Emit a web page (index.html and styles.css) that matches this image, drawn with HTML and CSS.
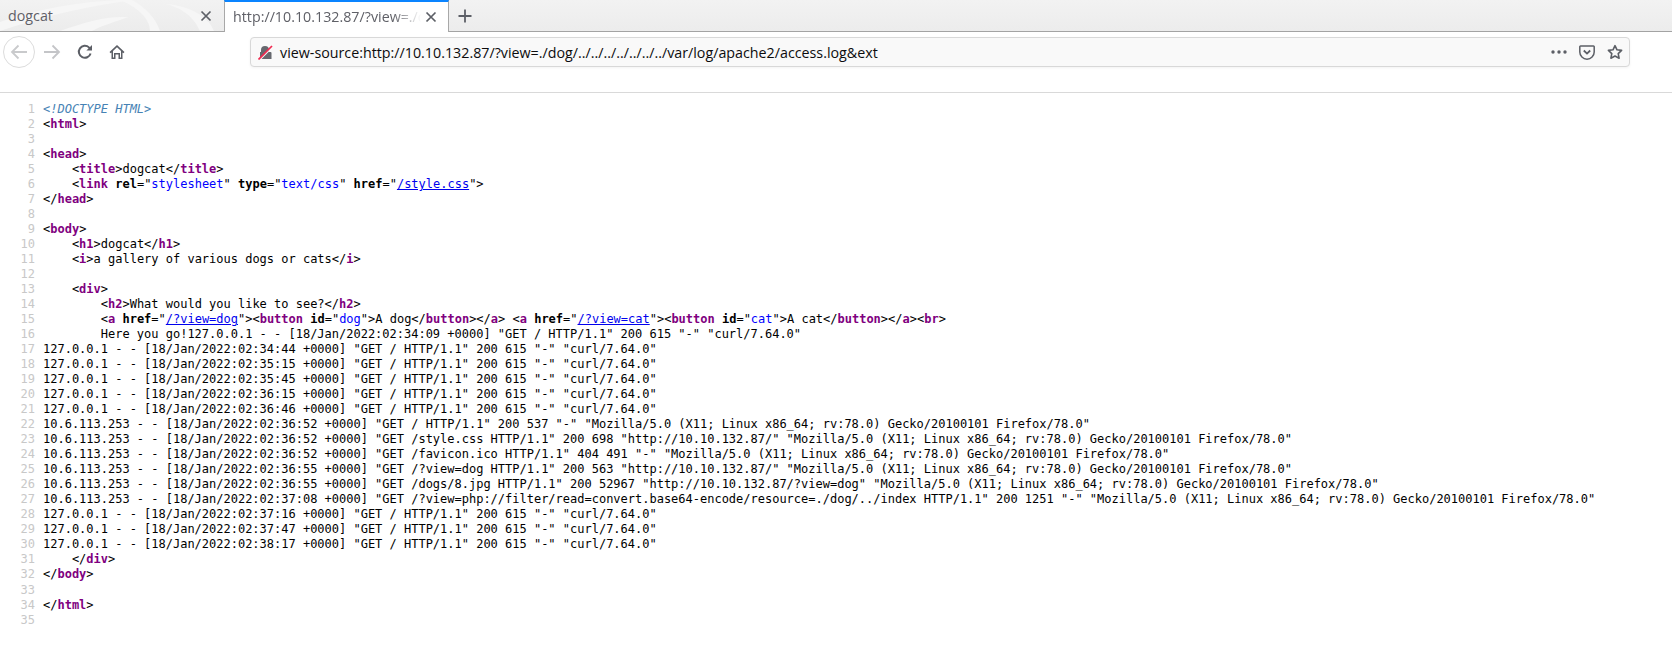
FILE: index.html
```html
<!DOCTYPE html>
<html lang="en">
<head>
<meta charset="utf-8">
<title>dogcat</title>
<link rel="stylesheet" href="styles.css">
</head>
<body>
<header class="chrome">
  <div class="tabbar">
    <svg class="wallpaper" width="224" height="31" viewBox="0 0 224 31" aria-hidden="true">
      <path d="M0 22C40 8 80 2 118 0L135 0C95 5 50 14 0 31Z" fill="#f6f6f6"/>
      <path d="M60 31C85 22 105 16 128 17C118 21 100 26 92 31Z" fill="#f6f6f6"/>
      <path d="M120 0C140 8 150 20 150 31L160 31C156 18 145 7 132 0Z" fill="#f6f6f6"/>
      <path d="M166 4C180 8 192 14 200 31L214 31C208 16 190 6 166 4Z" fill="#f6f6f6"/>
    </svg>
    <div class="tab">
      <span class="tab-title">dogcat</span>
      <svg class="tab-close" width="12" height="12" viewBox="0 0 12 12"><path d="M1.5 1.5L10.5 10.5M10.5 1.5L1.5 10.5" stroke="#5c5f66" stroke-width="1.7"/></svg>
    </div>
    <div class="tab tab-active">
      <span class="tab-title tab-title-fade">http://10.10.132.87/?view=./d</span>
      <svg class="tab-close" width="12" height="12" viewBox="0 0 12 12"><path d="M1.5 1.5L10.5 10.5M10.5 1.5L1.5 10.5" stroke="#5c5f66" stroke-width="1.7"/></svg>
    </div>
    <svg class="new-tab" width="16" height="16" viewBox="0 0 16 16"><path d="M8 1.5V14.5M1.5 8H14.5" stroke="#5c5f66" stroke-width="1.8"/></svg>
  </div>
  <div class="navbar">
    <div class="nav-buttons">
      <div class="back-circle">
        <svg width="18" height="16" viewBox="0 0 18 16"><path d="M17 8H2M8.5 1.5L2 8L8.5 14.5" fill="none" stroke="#c9cacc" stroke-width="1.8"/></svg>
      </div>
      <svg class="forward" width="18" height="16" viewBox="0 0 18 16"><path d="M1 8H16M9.5 1.5L16 8L9.5 14.5" fill="none" stroke="#c4c5c8" stroke-width="1.8"/></svg>
      <svg class="reload" width="16" height="16" viewBox="0 0 16 16"><path d="M13.6 9.5A6 6 0 1 1 12 3.4L14 5.2" fill="none" stroke="#5c5f66" stroke-width="2"/><path d="M15 1V6.6H9.4Z" fill="#5c5f66"/></svg>
      <svg class="home" width="16" height="16" viewBox="0 0 16 16"><path d="M8 1L0.5 8L1.6 9.2L2.5 8.4V15H6.5V10.5H9.5V15H13.5V8.4L14.4 9.2L15.5 8ZM4 13.6V7.1L8 3.2L12 7.1V13.6H11V9H5V13.6Z" fill="#5c5f66"/></svg>
    </div>
    <div class="urlbar">
      <svg class="lock" width="15" height="15" viewBox="0 0 15 15"><path d="M2 7H3V5A4 4 0 0 1 11 5V7H12.5A1 1 0 0 1 13.5 8V14H3A1 1 0 0 1 2 13Z" fill="#66686e"/><path d="M0.5 16L15 1.6" stroke="#f9f9f9" stroke-width="1.4"/><path d="M0.5 14.5L14 1" stroke="#f02a50" stroke-width="1.7"/></svg>
      <span class="url">view-source:http://10.10.132.87/?view=./dog/../../../../../../../var/log/apache2/access.log&amp;ext</span>
      <span class="url-actions">
        <svg width="16" height="4" viewBox="0 0 16 4"><circle cx="2" cy="2" r="1.7" fill="#5c5f66"/><circle cx="8" cy="2" r="1.7" fill="#5c5f66"/><circle cx="14" cy="2" r="1.7" fill="#5c5f66"/></svg>
        <svg width="16" height="15" viewBox="0 0 16 15"><path d="M1.5 1H14.5A.7.7 0 0 1 15.2 1.7V7A7 7 0 0 1 .8 7V1.7A.7.7 0 0 1 1.5 1Z" fill="none" stroke="#5c5f66" stroke-width="1.5"/><path d="M4.8 5.5L8 8.6L11.2 5.5" fill="none" stroke="#5c5f66" stroke-width="1.8"/></svg>
        <svg width="16" height="16" viewBox="0 0 16 16"><path d="M8 1.6L10 5.8L14.6 6.4L11.2 9.6L12.1 14.2L8 12L3.9 14.2L4.8 9.6L1.4 6.4L6 5.8Z" fill="none" stroke="#5c5f66" stroke-width="1.6" stroke-linejoin="round"/></svg>
      </span>
    </div>
  </div>
</header>
<main class="source">
<div class="row"><span class="num">1</span><span class="code"><span class="doctype">&lt;!DOCTYPE HTML&gt;</span></span></div>
<div class="row"><span class="num">2</span><span class="code">&lt;<b class="tag">html</b>&gt;</span></div>
<div class="row"><span class="num">3</span><span class="code"></span></div>
<div class="row"><span class="num">4</span><span class="code">&lt;<b class="tag">head</b>&gt;</span></div>
<div class="row"><span class="num">5</span><span class="code">    &lt;<b class="tag">title</b>&gt;dogcat&lt;/<b class="tag">title</b>&gt;</span></div>
<div class="row"><span class="num">6</span><span class="code">    &lt;<b class="tag">link</b> <b>rel</b>="<span class="val">stylesheet</span>" <b>type</b>="<span class="val">text/css</span>" <b>href</b>="<a class="val-link" href="#">/style.css</a>"&gt;</span></div>
<div class="row"><span class="num">7</span><span class="code">&lt;/<b class="tag">head</b>&gt;</span></div>
<div class="row"><span class="num">8</span><span class="code"></span></div>
<div class="row"><span class="num">9</span><span class="code">&lt;<b class="tag">body</b>&gt;</span></div>
<div class="row"><span class="num">10</span><span class="code">    &lt;<b class="tag">h1</b>&gt;dogcat&lt;/<b class="tag">h1</b>&gt;</span></div>
<div class="row"><span class="num">11</span><span class="code">    &lt;<b class="tag">i</b>&gt;a gallery of various dogs or cats&lt;/<b class="tag">i</b>&gt;</span></div>
<div class="row"><span class="num">12</span><span class="code"></span></div>
<div class="row"><span class="num">13</span><span class="code">    &lt;<b class="tag">div</b>&gt;</span></div>
<div class="row"><span class="num">14</span><span class="code">        &lt;<b class="tag">h2</b>&gt;What would you like to see?&lt;/<b class="tag">h2</b>&gt;</span></div>
<div class="row"><span class="num">15</span><span class="code">        &lt;<b class="tag">a</b> <b>href</b>="<a class="val-link" href="#">/?view=dog</a>"&gt;&lt;<b class="tag">button</b> <b>id</b>="<span class="val">dog</span>"&gt;A dog&lt;/<b class="tag">button</b>&gt;&lt;/<b class="tag">a</b>&gt; &lt;<b class="tag">a</b> <b>href</b>="<a class="val-link" href="#">/?view=cat</a>"&gt;&lt;<b class="tag">button</b> <b>id</b>="<span class="val">cat</span>"&gt;A cat&lt;/<b class="tag">button</b>&gt;&lt;/<b class="tag">a</b>&gt;&lt;<b class="tag">br</b>&gt;</span></div>
<div class="row"><span class="num">16</span><span class="code">        Here you go!127.0.0.1 - - [18/Jan/2022:02:34:09 +0000] "GET / HTTP/1.1" 200 615 "-" "curl/7.64.0"</span></div>
<div class="row"><span class="num">17</span><span class="code">127.0.0.1 - - [18/Jan/2022:02:34:44 +0000] "GET / HTTP/1.1" 200 615 "-" "curl/7.64.0"</span></div>
<div class="row"><span class="num">18</span><span class="code">127.0.0.1 - - [18/Jan/2022:02:35:15 +0000] "GET / HTTP/1.1" 200 615 "-" "curl/7.64.0"</span></div>
<div class="row"><span class="num">19</span><span class="code">127.0.0.1 - - [18/Jan/2022:02:35:45 +0000] "GET / HTTP/1.1" 200 615 "-" "curl/7.64.0"</span></div>
<div class="row"><span class="num">20</span><span class="code">127.0.0.1 - - [18/Jan/2022:02:36:15 +0000] "GET / HTTP/1.1" 200 615 "-" "curl/7.64.0"</span></div>
<div class="row"><span class="num">21</span><span class="code">127.0.0.1 - - [18/Jan/2022:02:36:46 +0000] "GET / HTTP/1.1" 200 615 "-" "curl/7.64.0"</span></div>
<div class="row"><span class="num">22</span><span class="code">10.6.113.253 - - [18/Jan/2022:02:36:52 +0000] "GET / HTTP/1.1" 200 537 "-" "Mozilla/5.0 (X11; Linux x86_64; rv:78.0) Gecko/20100101 Firefox/78.0"</span></div>
<div class="row"><span class="num">23</span><span class="code">10.6.113.253 - - [18/Jan/2022:02:36:52 +0000] "GET /style.css HTTP/1.1" 200 698 "http://10.10.132.87/" "Mozilla/5.0 (X11; Linux x86_64; rv:78.0) Gecko/20100101 Firefox/78.0"</span></div>
<div class="row"><span class="num">24</span><span class="code">10.6.113.253 - - [18/Jan/2022:02:36:52 +0000] "GET /favicon.ico HTTP/1.1" 404 491 "-" "Mozilla/5.0 (X11; Linux x86_64; rv:78.0) Gecko/20100101 Firefox/78.0"</span></div>
<div class="row"><span class="num">25</span><span class="code">10.6.113.253 - - [18/Jan/2022:02:36:55 +0000] "GET /?view=dog HTTP/1.1" 200 563 "http://10.10.132.87/" "Mozilla/5.0 (X11; Linux x86_64; rv:78.0) Gecko/20100101 Firefox/78.0"</span></div>
<div class="row"><span class="num">26</span><span class="code">10.6.113.253 - - [18/Jan/2022:02:36:55 +0000] "GET /dogs/8.jpg HTTP/1.1" 200 52967 "http://10.10.132.87/?view=dog" "Mozilla/5.0 (X11; Linux x86_64; rv:78.0) Gecko/20100101 Firefox/78.0"</span></div>
<div class="row"><span class="num">27</span><span class="code">10.6.113.253 - - [18/Jan/2022:02:37:08 +0000] "GET /?view=php://filter/read=convert.base64-encode/resource=./dog/../index HTTP/1.1" 200 1251 "-" "Mozilla/5.0 (X11; Linux x86_64; rv:78.0) Gecko/20100101 Firefox/78.0"</span></div>
<div class="row"><span class="num">28</span><span class="code">127.0.0.1 - - [18/Jan/2022:02:37:16 +0000] "GET / HTTP/1.1" 200 615 "-" "curl/7.64.0"</span></div>
<div class="row"><span class="num">29</span><span class="code">127.0.0.1 - - [18/Jan/2022:02:37:47 +0000] "GET / HTTP/1.1" 200 615 "-" "curl/7.64.0"</span></div>
<div class="row"><span class="num">30</span><span class="code">127.0.0.1 - - [18/Jan/2022:02:38:17 +0000] "GET / HTTP/1.1" 200 615 "-" "curl/7.64.0"</span></div>
<div class="row"><span class="num">31</span><span class="code">    &lt;/<b class="tag">div</b>&gt;</span></div>
<div class="row"><span class="num">32</span><span class="code">&lt;/<b class="tag">body</b>&gt;</span></div>
<div class="row"><span class="num">33</span><span class="code"></span></div>
<div class="row"><span class="num">34</span><span class="code">&lt;/<b class="tag">html</b>&gt;</span></div>
<div class="row"><span class="num">35</span><span class="code"></span></div>
</main>
</body>
</html>
```
FILE: styles.css
```css
* { box-sizing: border-box; }
html, body { margin: 0; padding: 0; background: #fff; overflow: hidden; }
body { height: 667px; }

.tabbar {
  position: relative;
  display: flex;
  align-items: stretch;
  height: 32px;
  background: linear-gradient(#f2f2f2, #ececec);
  border-bottom: 1px solid #a3a3a3;
}
.wallpaper { position: absolute; left: 0; top: 0; }
.tab {
  position: relative;
  display: flex;
  align-items: center;
  justify-content: space-between;
  width: 224px;
  height: 31px;
  padding: 0 12px 0 8px;
  font: 14.27px "Open Sans", sans-serif;
  color: #5f6067;
}
.tab-active {
  height: 32px;
  padding: 0 11px 1px 8px;
  background: #fff;
  border-top: 2px solid #0a84ff;
  border-left: 1px solid #a8a8a8;
  border-right: 1px solid #a8a8a8;
  width: 225px;
}
.tab-title { white-space: nowrap; flex: 1; min-width: 0; }
.tab-title-fade {
  -webkit-mask-image: linear-gradient(to right, #000 85%, transparent 100%);
  mask-image: linear-gradient(to right, #000 85%, transparent 100%);
}
.tab-close { flex: none; margin-left: 4px; }
.new-tab { position: relative; align-self: center; margin-left: 8px; }

.navbar {
  display: flex;
  align-items: flex-start;
  height: 61px;
  background: #fff;
  border-bottom: 1px solid #d9d9d9;
  padding-top: 5px;
}
.nav-buttons { display: flex; align-items: center; width: 250px; padding-left: 3px; height: 30px; }
.back-circle {
  display: flex; align-items: center; justify-content: center;
  width: 32px; height: 32px; border: 1px solid #dcdcdc; border-radius: 50%;
  flex: none;
}
.forward { margin-left: 8px; flex: none; }
.reload { margin-left: 16px; flex: none; }
.home { margin-left: 16px; flex: none; }

.urlbar {
  display: flex;
  align-items: center;
  width: 1380px;
  height: 30px;
  padding: 0 6px 0 7px;
  background: #f9f9f9;
  border: 1px solid #d8d8d8;
  border-radius: 4px;
  box-shadow: 0 1px 3px rgba(0,0,0,.05);
}
.lock { flex: none; }
.url {
  flex: 1;
  margin-left: 7px;
  font: 14.27px "Open Sans", sans-serif;
  color: #0c0c0d;
  white-space: nowrap;
}
.url-actions { display: flex; align-items: center; gap: 12px; }

.source {
  padding-top: 9px;
  font: 12px/15px "DejaVu Sans Mono", monospace;
  letter-spacing: -0.005px;
  color: #000;
}
.row { display: flex; height: 15.02px; }
.num { width: 35px; text-align: right; color: #c8c8c8; flex: none; }
.code { margin-left: 8px; white-space: pre; }
.tag { color: #800080; }
.val { color: #0000ff; }
.val-link { color: #0000ee; text-decoration: underline; }
.doctype { color: #4682b4; font-style: italic; }
```
